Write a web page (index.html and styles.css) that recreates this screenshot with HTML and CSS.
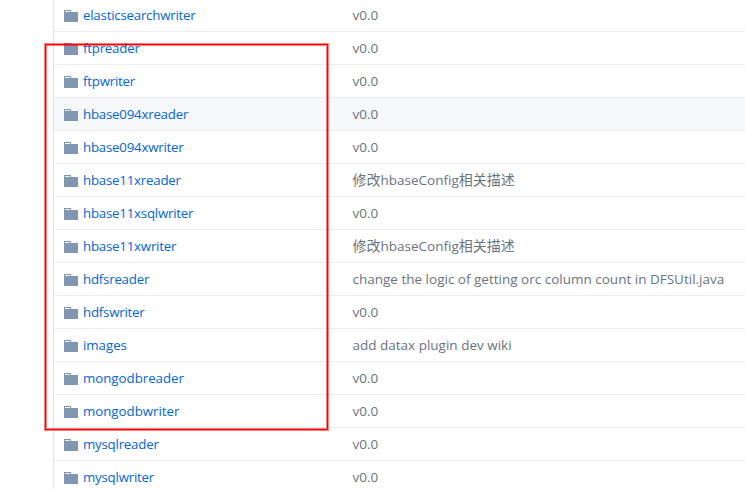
FILE: index.html
```html
<!DOCTYPE html>
<html lang="en">
<head>
<meta charset="utf-8">
<title>Files</title>
<link rel="stylesheet" href="styles.css">
</head>
<body>
<main class="files" id="files"></main>
<div class="highlight"></div>
<script src="files.js"></script>
</body>
</html>
```
FILE: styles.css
```css
* { box-sizing: border-box; }
body {
  margin: 0;
  height: 489px;
  overflow: hidden;
  background: #fff;
  font: 13.5px/20px "Open Sans", "Noto Sans CJK SC", sans-serif;
}
.files {
  margin-left: 53px;
  margin-top: -1px;
  border-left: 1px solid #dfe2e5;
}
.row {
  display: flex;
  align-items: center;
  height: 33px;
  padding-left: 10px;
  border-bottom: 1px solid #eaecef;
}
.row.hover { background: #f6f8fa; }
.icon { width: 14px; height: 12px; flex: none; margin: 2px 5px 0 0; fill: #8197b1; }
.name { width: 269.5px; flex: none; color: #0366d6; font-size: 13.3px; letter-spacing: -0.23px; white-space: nowrap; }
.name.loose { letter-spacing: -0.03px; }
.message { color: #6a737d; white-space: nowrap; }
.cjk { font-size: 14px; }
.highlight {
  position: absolute;
  left: 45px;
  top: 44px;
  width: 283px;
  height: 386px;
  border: 1px solid #f00;
  outline: 1px solid rgba(255, 0, 0, 0.5);
  box-shadow: inset 0 0 0 1px rgba(255, 0, 0, 0.5);
}
```
FILE: files.js
```js
const rows = [
  ["elasticsearchwriter", "v0.0"],
  ["ftpreader", "v0.0"],
  ["ftpwriter", "v0.0"],
  ["hbase094xreader", "v0.0"],
  ["hbase094xwriter", "v0.0"],
  ["hbase11xreader", "修改hbaseConfig相关描述"],
  ["hbase11xsqlwriter", "v0.0"],
  ["hbase11xwriter", "修改hbaseConfig相关描述"],
  ["hdfsreader", "change the logic of getting orc column count in DFSUtil.java"],
  ["hdfswriter", "v0.0"],
  ["images", "add datax plugin dev wiki"],
  ["mongodbreader", "v0.0"],
  ["mongodbwriter", "v0.0"],
  ["mysqlreader", "v0.0"],
  ["mysqlwriter", "v0.0"]
];
const cjk = text => text.replace(/[\u4e00-\u9fff]+/g, '<span class="cjk">$&</span>');
document.getElementById("files").innerHTML = rows.map(([name, message]) => `
  <div class="row${name === "hbase094xreader" ? " hover" : ""}">
    <svg class="icon" viewBox="0 0 14 12" shape-rendering="crispEdges"><path fill-rule="evenodd" d="M0 0H7V2H14V12H0ZM1 1V2H6V1Z"/></svg>
    <span class="name${/^(mongo|images)/.test(name) ? " loose" : ""}">${name}</span>
    <span class="message">${cjk(message)}</span>
  </div>`).join("");
```
